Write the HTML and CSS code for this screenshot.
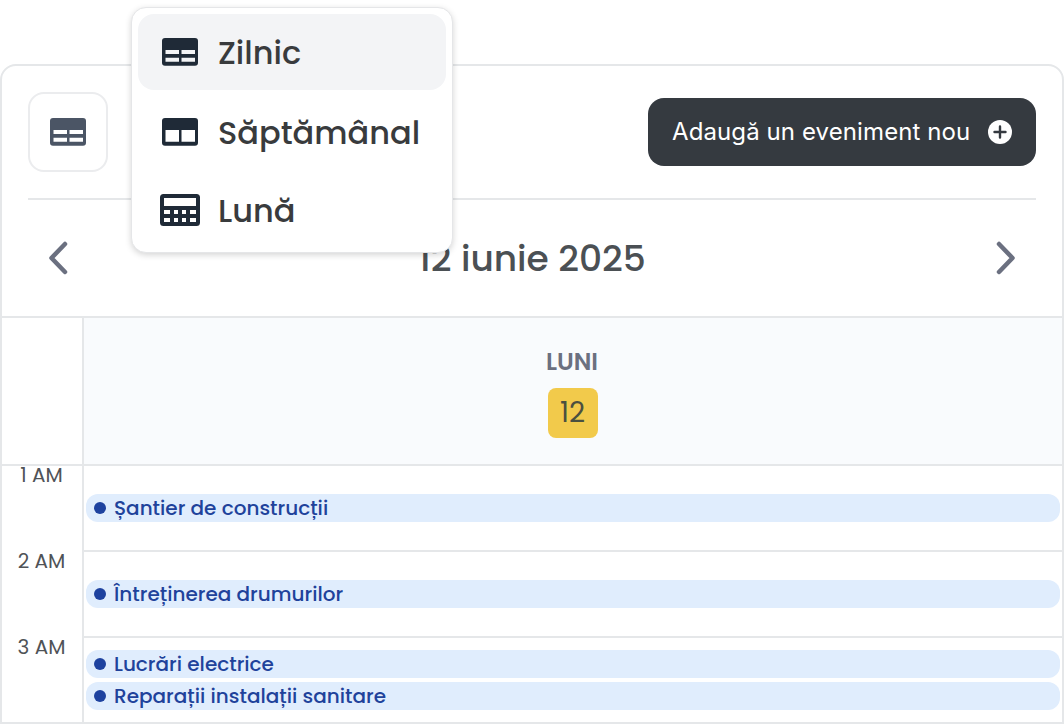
FILE: index.html
```html
<!DOCTYPE html>
<html lang="ro">
<head>
<meta charset="utf-8">
<title>Calendar</title>
<link rel="stylesheet" href="styles.css">
</head>
<body>
<main class="calendar">
  <header class="toolbar">
    <button class="view-button" aria-label="Vizualizare">
      <svg width="40" height="32" viewBox="0 0 40 32"><path fill="currentColor" fill-rule="evenodd" d="M5 2H35Q38 2 38 5V26.700Q38 29.700 35 29.700H5Q2 29.700 2 26.700V5Q2 2 5 2ZM5.500 14V18H19V14ZM21.500 14V18H35V14ZM5.500 21.700V25.700H19V21.700ZM21.500 21.700V25.700H35V21.700Z"/></svg>
    </button>
    <button class="add-button">
      <span class="add-label">Adaugă un eveniment nou</span>
      <svg width="24" height="24" viewBox="0 0 24 24"><circle cx="12" cy="12" r="12" fill="#fff"/><path d="M12 6.500V17.500M6.500 12H17.500" stroke="#353a40" stroke-width="2.400" stroke-linecap="round"/></svg>
    </button>
  </header>
  <nav class="date-nav">
    <svg class="chevron" width="24" height="36" viewBox="0 0 24 36"><path d="M19 4L5.500 18L19 32"/></svg>
    <h1 class="date"><span>12 iunie 2025</span></h1>
    <svg class="chevron" width="24" height="36" viewBox="0 0 24 36"><path d="M5 4L18.500 18L5 32"/></svg>
  </nav>
  <section class="day-head">
    <div class="corner"></div>
    <div class="day">
      <span class="weekday">LUNI</span>
      <span class="day-number">12</span>
    </div>
  </section>
  <section class="hour">
    <div class="time"><span>1 AM</span></div>
    <div class="slot"><div class="event"><i class="dot"></i><span>Șantier de construcții</span></div></div>
  </section>
  <section class="hour">
    <div class="time"><span>2 AM</span></div>
    <div class="slot"><div class="event"><i class="dot"></i><span>Întreținerea drumurilor</span></div></div>
  </section>
  <section class="hour">
    <div class="time"><span>3 AM</span></div>
    <div class="slot">
      <div class="event"><i class="dot"></i><span>Lucrări electrice</span></div>
      <div class="event"><i class="dot"></i><span>Reparații instalații sanitare</span></div>
    </div>
  </section>
</main>
<div class="menu">
  <div class="menu-item selected">
    <svg width="40" height="32" viewBox="0 0 40 32"><path fill="currentColor" fill-rule="evenodd" d="M5 2H35Q38 2 38 5V26.700Q38 29.700 35 29.700H5Q2 29.700 2 26.700V5Q2 2 5 2ZM5.500 14V18H19V14ZM21.500 14V18H35V14ZM5.500 21.700V25.700H19V21.700ZM21.500 21.700V25.700H35V21.700Z"/></svg>
    <span>Zilnic</span>
  </div>
  <div class="menu-item week">
    <svg width="40" height="32" viewBox="0 0 40 32"><path fill="currentColor" fill-rule="evenodd" d="M5 2H35Q38 2 38 5V26.700Q38 29.700 35 29.700H5Q2 29.700 2 26.700V5Q2 2 5 2ZM5.500 14V25.700H19V14ZM21.500 14V25.700H35V14Z"/></svg>
    <span>Săptămânal</span>
  </div>
  <div class="menu-item">
    <svg width="40" height="32" viewBox="0 0 40 32"><path fill="currentColor" fill-rule="evenodd" d="M3.500 0H36.500Q40 0 40 3.500V28.500Q40 32 36.500 32H3.500Q0 32 0 28.500V3.500Q0 0 3.500 0ZM4 4V12H36V4ZM4 16V20H10V16ZM14 16V20H18V16ZM22 16V20H26V16ZM30 16V20H36V16ZM4 24V28H10V24ZM14 24V28H18V24ZM22 24V28H26V24ZM30 24V28H36V24Z"/></svg>
    <span>Lună</span>
  </div>
</div>
</body>
</html>
```
FILE: styles.css
```css
* { box-sizing: border-box; }
body {
  margin: 0;
  padding-top: 64px;
  background: #fff;
  font-family: Poppins, Inter, sans-serif;
  overflow: hidden;
}
svg { display: block; flex: none; }
span { white-space: nowrap; }
button { font: inherit; margin: 0; padding: 0; }
.calendar {
  height: 660px;
  border: 2px solid #e5e7e9;
  border-radius: 16px 16px 0 0;
}
.toolbar {
  display: flex;
  align-items: center;
  justify-content: space-between;
  height: 134px;
  margin: 0 26px;
  border-bottom: 2px solid #e5e7e9;
}
.view-button {
  display: grid;
  place-items: center;
  width: 80px;
  height: 80px;
  border: 2px solid #ebecee;
  border-radius: 16px;
  background: #fff;
  color: #4b5565;
}
.add-button {
  display: flex;
  align-items: center;
  justify-content: space-between;
  width: 388px;
  height: 68px;
  padding: 0 24px;
  border: 0;
  border-radius: 16px;
  background: #353a40;
  color: #fff;
}
.add-label { font: 400 24px/36px Inter, sans-serif; letter-spacing: .1px; }
.date-nav {
  display: flex;
  align-items: center;
  justify-content: space-between;
  height: 116px;
  padding: 0 44px;
}
.chevron { fill: none; stroke: #6b7080; stroke-width: 4.500; stroke-linecap: round; stroke-linejoin: round; }
.date { margin: 0; padding-top: 2px; font-size: 36px; font-weight: 500; line-height: 48px; color: #4b5054; }
.day-head {
  display: grid;
  grid-template-columns: 82px 1fr;
  height: 150px;
  border-top: 2px solid #e5e7e9;
  border-bottom: 2px solid #e5e7e9;
}
.corner { border-right: 2px solid #e5e7e9; }
.day {
  display: flex;
  flex-direction: column;
  align-items: center;
  gap: 8px;
  padding-top: 26px;
  background: #f9fbfd;
}
.weekday { padding-right: 2px; font-size: 24px; font-weight: 600; line-height: 36px; color: #6b7080; }
.day-number {
  width: 50px;
  height: 50px;
  padding-right: 1px;
  border-radius: 8px;
  background: #f2ca4b;
  font-size: 28px;
  line-height: 49px;
  text-align: center;
  color: #4b5040;
}
.hour { display: grid; grid-template-columns: 82px 1fr; height: 86px; }
.time {
  padding-right: 1px;
  border-right: 2px solid #e5e7e9;
  font-size: 20px;
  line-height: 18px;
  text-align: center;
  color: #505357;
}
.slot {
  display: flex;
  flex-direction: column;
  justify-content: center;
  gap: 4px;
  padding: 0 2px;
  border-bottom: 2px solid #e5e7e9;
}
.hour:last-child .slot { border-bottom-color: transparent; }
.event {
  display: flex;
  align-items: center;
  gap: 8px;
  height: 28px;
  padding-left: 8px;
  border-radius: 12px;
  background: #e0edfd;
  font-size: 20px;
  font-weight: 500;
  line-height: 28px;
  color: #20429b;
}
.dot { width: 12px; height: 12px; border-radius: 50%; background: #1e429f; }
.menu {
  position: absolute;
  top: 7px;
  left: 131px;
  width: 322px;
  height: 246px;
  padding: 6px;
  border: 1px solid #e5e6e8;
  border-radius: 15px;
  background: #fff;
  box-shadow: 0 2px 6px rgba(0, 0, 0, .17);
}
.menu-item {
  display: flex;
  align-items: center;
  gap: 18px;
  height: 76px;
  margin-bottom: 3px;
  padding-left: 22px;
  border-radius: 16px;
  font-size: 32px;
  font-weight: 500;
  line-height: 48px;
  color: #1f2a37;
}
.week { height: 78px; margin-bottom: 1px; }
.menu-item span { padding-top: 2px; color: #393b3d; }
.selected { background: #f3f4f6; }
```
